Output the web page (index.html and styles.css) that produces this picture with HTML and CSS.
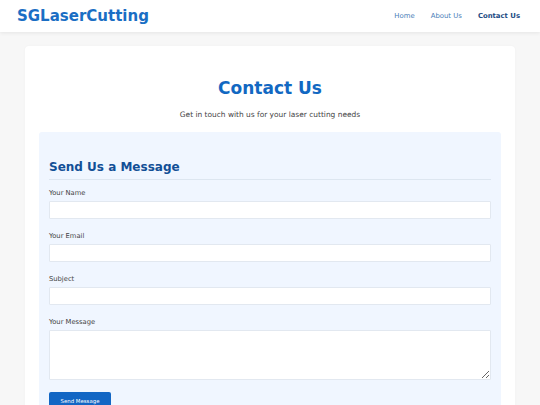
FILE: index.html
```html
<!DOCTYPE html>
<html lang="en">
<head>
<meta charset="utf-8">
<title>Contact Us - SGLaserCutting</title>
<link rel="stylesheet" href="styles.css">
</head>
<body>
<header class="site-header">
  <div class="logo">SGLaserCutting</div>
  <nav class="nav">
    <a href="#" class="nav-link">Home</a>
    <a href="#" class="nav-link">About Us</a>
    <a href="#" class="nav-link active">Contact Us</a>
  </nav>
</header>
<main class="page">
  <section class="card">
    <h1 class="title">Contact Us</h1>
    <p class="subtitle">Get in touch with us for your laser cutting needs</p>
    <div class="form-box">
      <h2 class="form-title">Send Us a Message</h2>
      <form class="form">
        <div class="field">
          <label class="label">Your Name</label>
          <input class="input" type="text">
        </div>
        <div class="field">
          <label class="label">Your Email</label>
          <input class="input" type="email">
        </div>
        <div class="field">
          <label class="label">Subject</label>
          <input class="input" type="text">
        </div>
        <div class="field last">
          <label class="label">Your Message</label>
          <textarea class="input textarea"></textarea>
        </div>
        <button class="btn" type="button">Send Message</button>
      </form>
    </div>
  </section>
</main>
</body>
</html>
```
FILE: styles.css
```css
* { box-sizing: border-box; }
html, body { margin: 0; padding: 0; }
body {
  font-family: "DejaVu Sans", Verdana, sans-serif;
  background: #f7f7f7;
  color: #333;
  height: 405px;
  overflow: hidden;
}
.site-header {
  height: 32px;
  background: #fff;
  box-shadow: 0 1px 4px rgba(0,0,0,0.08);
  display: flex;
  align-items: center;
  justify-content: space-between;
  padding: 0 20px 0 17px;
  position: relative;
  z-index: 1;
}
.logo {
  font-size: 15px;
  font-weight: bold;
  color: #1a6ec4;
  padding-bottom: 1px;
}
.nav { display: flex; gap: 16px; }
.nav-link {
  font-size: 6.9px;
  color: #4a80b8;
  text-decoration: none;
}
.nav-link.active { color: #1a4a82; font-weight: bold; }
.page { padding: 14px 25px 0; }
.card {
  background: #fff;
  border-radius: 4px;
  padding: 31px 14px 20px;
  box-shadow: 0 0 3px rgba(0,0,0,0.03);
}
.title {
  margin: 0;
  text-align: center;
  font-size: 17px;
  line-height: 22px;
  color: #1268c2;
  font-weight: bold;
}
.subtitle {
  margin: 11px 0 0;
  text-align: center;
  font-size: 7.45px;
  line-height: 10px;
  color: #444;
}
.form-box {
  margin-top: 12px;
  background: #f0f6ff;
  border-radius: 3px;
  padding: 27px 10px 20px;
}
.form-title {
  margin: 0;
  font-size: 12px;
  line-height: 16px;
  color: #124f96;
  font-weight: bold;
  padding-bottom: 4px;
  border-bottom: 1px solid #dde6f0;
}
.form { margin-top: 8px; }
.field { margin-bottom: 12px; }
.field.last { margin-bottom: 12px; }
.label {
  display: block;
  font-size: 6.75px;
  line-height: 10px;
  color: #444;
  margin-bottom: 3px;
}
.input {
  display: block;
  width: 100%;
  height: 18px;
  border: 1px solid #e2e8f0;
  border-radius: 1px;
  background: #fff;
  font-family: inherit;
  margin: 0;
  padding: 2px 4px;
}
.textarea { height: 50px; resize: vertical; }
.btn {
  display: block;
  width: 62px;
  height: 18px;
  border: none;
  border-radius: 2px;
  background: #1266c4;
  color: #fff;
  font-family: inherit;
  font-size: 5.4px;
  padding: 0;
}
```
